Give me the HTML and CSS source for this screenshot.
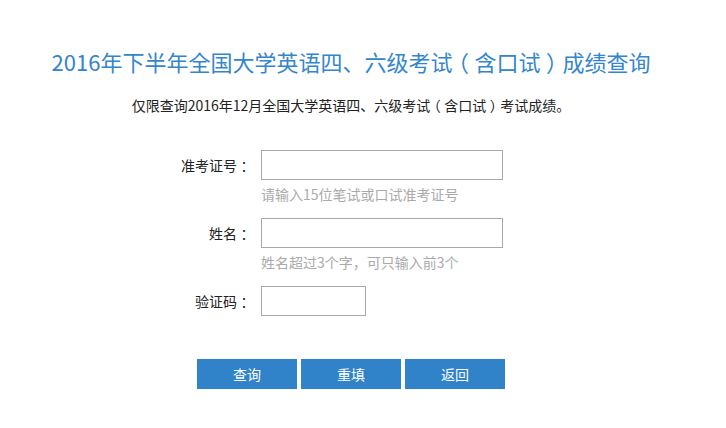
FILE: index.html
```html
<!DOCTYPE html>
<html lang="zh-CN">
<head>
  <meta charset="UTF-8">
  <title>2016年下半年全国大学英语四、六级考试（含口试）成绩查询</title>
  <link rel="stylesheet" href="styles.css">
</head>
<body>
  <div class="container">
    <h1 class="title">2016年下半年全国大学英语四、六级考试<span class="punct">（</span>含口试<span class="punct">）</span>成绩查询</h1>
    <p class="notice">仅限查询2016年12月全国大学英语四、六级考试<span class="punct">（</span>含口试<span class="punct">）</span>考试成绩。</p>

    <form class="query-form" action="#" onsubmit="return false;">
      <div class="row">
        <label class="label" for="zkzh">准考证号<span class="punct">：</span></label>
        <div class="field">
          <input id="zkzh" class="text-input" type="text" maxlength="15">
          <div class="hint">请输入15位笔试或口试准考证号</div>
        </div>
      </div>
      <div class="row">
        <label class="label" for="xm">姓名<span class="punct">：</span></label>
        <div class="field">
          <input id="xm" class="text-input" type="text">
          <div class="hint">姓名超过3个字，可只输入前3个</div>
        </div>
      </div>
      <div class="row">
        <label class="label" for="yzm">验证码<span class="punct">：</span></label>
        <div class="field">
          <input id="yzm" class="text-input code-input" type="text" maxlength="4">
        </div>
      </div>

      <div class="buttons">
        <button class="btn" type="submit">查询</button>
        <button class="btn" type="reset">重填</button>
        <button class="btn" type="button">返回</button>
      </div>
    </form>
  </div>
</body>
</html>
```

FILE: styles.css
```css
body {
  margin: 0;
  background: #fff;
  color: #222;
  font-family: "Noto Sans CJK SC", "Microsoft YaHei", sans-serif;
  font-size: 14px;
}
.container {
  width: 702px;
  padding-top: 46px;
}
/* 全角标点居中显示 */
.punct {
  font-feature-settings: "halt";
  padding: 0 0.25em;
}
.title {
  margin: 0;
  font-size: 22px;
  font-weight: normal;
  line-height: 30px;
  color: #3386cc;
  text-align: center;
}
.notice {
  margin: 19px 0 0;
  line-height: 20px;
  text-align: center;
}
.query-form {
  margin-top: 35px;
  padding-left: 151px;
}
.row {
  display: flex;
  margin-bottom: 14px;
}
.label {
  width: 100px;
  margin-right: 10px;
  line-height: 30px;
  text-align: right;
}
.text-input {
  display: block;
  box-sizing: border-box;
  width: 242px;
  height: 30px;
  margin: 0;
  padding: 0 5px;
  border: 1px solid #a9a9a9;
  font: inherit;
}
.code-input {
  width: 105px;
}
.hint {
  margin-top: 4px;
  line-height: 20px;
  color: #aaa;
}
.buttons {
  display: flex;
  gap: 4px;
  margin-top: 43px;
  padding-left: 46px;
}
.btn {
  width: 100px;
  height: 30px;
  padding: 0;
  border: 0;
  background: #3083c8;
  color: #fff;
  font: inherit;
  cursor: pointer;
}
```
